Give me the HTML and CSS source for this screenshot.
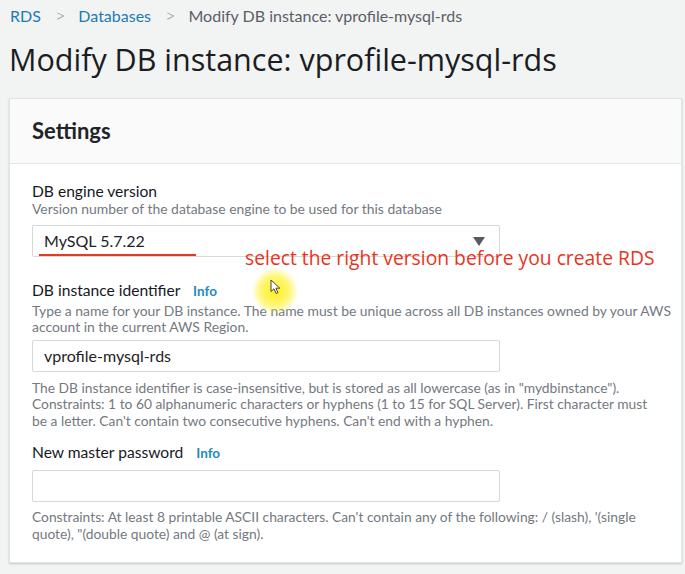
FILE: index.html
```html
<!DOCTYPE html>
<html lang="en">
<head>
<meta charset="utf-8">
<title>Modify DB instance</title>
<link rel="stylesheet" href="styles.css">
</head>
<body>
<nav class="crumbs">
  <a class="crumb-link">RDS</a>
  <span class="sep">&gt;</span>
  <a class="crumb-link">Databases</a>
  <span class="sep">&gt;</span>
  <span class="crumb-current">Modify DB instance: vprofile-mysql-rds</span>
</nav>
<h1 class="title">Modify DB instance: vprofile-mysql-rds</h1>
<section class="panel">
  <header class="panel-head"><h2>Settings</h2></header>
  <div class="panel-body">
    <div class="field">
      <div class="label">DB engine version</div>
      <div class="desc">Version number of the database engine to be used for this database</div>
      <div class="select-row">
        <div class="box select">
          <span class="value">MySQL 5.7.22</span>
          <span class="caret"></span>
          <span class="underline"></span>
        </div>
        <span class="note">select the right version before you create RDS</span>
      </div>
    </div>
    <div class="field f2">
      <div class="label">DB instance identifier <span class="info">Info</span><span class="spot"></span>
        <svg class="cursor" width="12" height="16" viewBox="0 0 12 16"><path d="M1 1 L1 12.5 L4 9.8 L6.2 14.5 L8 13.7 L5.9 9.2 L9.8 9.2 Z" fill="#fff" stroke="#444" stroke-width="1"/></svg>
      </div>
      <div class="desc d2">Type a name for your DB instance. The name must be unique across all DB instances owned by your AWS<br>account in the current AWS Region.</div>
      <div class="box input"><span class="value">vprofile-mysql-rds</span></div>
      <div class="help">The DB instance identifier is case-insensitive, but is stored as all lowercase (as in "mydbinstance").<br>Constraints: 1 to 60 alphanumeric characters or hyphens (1 to 15 for SQL Server). First character must<br>be a letter. Can't contain two consecutive hyphens. Can't end with a hyphen.</div>
    </div>
    <div class="field f3">
      <div class="label">New master password <span class="info">Info</span></div>
      <div class="box input pw"></div>
      <div class="help">Constraints: At least 8 printable ASCII characters. Can't contain any of the following: / (slash), '(single<br>quote), "(double quote) and @ (at sign).</div>
    </div>
  </div>
</section>
</body>
</html>
```
FILE: styles.css
```css
* { box-sizing: border-box; }
html, body { margin: 0; }
body {
  background: #f2f3f3;
  font-family: Lato, "Liberation Sans", sans-serif;
  color: #16191f;
  width: 685px;
  height: 574px;
  overflow: hidden;
  padding: 5px 0 0 9px;
}
.crumbs {
  display: flex;
  align-items: center;
  font-size: 16px;
  height: 20px;
  padding-left: 1px;
}
.crumb-link { color: #1d7ab8; }
.sep { color: #8d9399; margin: 0 13px 0 14px; font-size: 18px; font-weight: 300; }
.crumb-current { color: #5a6068; }
.title {
  font-family: "Open Sans", Lato, sans-serif;
  font-weight: 400;
  font-size: 30.5px;
  margin: 16px 0 0 0;
  line-height: 36px;
  color: #1a1d22;
}
.panel {
  margin-top: 21px;
  width: 673px;
  background: #fff;
  border: 1px solid #e2e4e4;
  box-shadow: 0 1px 2px rgba(0,0,0,0.18);
  height: 465px;
}
.panel-head {
  background: #fafafa;
  border-bottom: 1px solid #e6e8e8;
  height: 65px;
  padding: 18px 0 0 22px;
}
.panel-head h2 {
  margin: 0;
  font-size: 22px;
  font-weight: 700;
  color: #202428;
}
.panel-body { padding: 17px 0 0 22px; }
.label { font-size: 15.6px; line-height: 20px; position: relative; }
.info { color: #2489c3; font-weight: 700; font-size: 13.5px; margin-left: 9px; }
.desc, .help {
  font-size: 13.9px;
  line-height: 16.5px;
  color: #73797f;
  white-space: nowrap;
}
.d2 { margin-top: 2px; }
.help { font-size: 13.8px; }
.box {
  width: 468px;
  height: 32px;
  border: 1px solid #d5d9d9;
  border-radius: 2px;
  background: #fff;
  display: flex;
  align-items: center;
  padding-left: 11px;
  font-size: 16px;
  color: #1e2226;
  position: relative;
}
.select-row { display: flex; align-items: flex-end; margin-top: 7px; }
.select { flex: none; }
.caret {
  position: absolute;
  right: 14px;
  top: 11px;
  width: 0; height: 0;
  border-left: 6px solid transparent;
  border-right: 6px solid transparent;
  border-top: 9px solid #545b64;
}
.underline {
  position: absolute;
  left: 6px;
  top: 28px;
  width: 157px;
  height: 2px;
  background: #e23b25;
}
.note {
  font-family: "Open Sans", Lato, sans-serif;
  color: #e8341c;
  font-size: 19.3px;
  margin-left: -255px;
  margin-bottom: -14px;
  position: relative;
  white-space: nowrap;
}
.f2 { margin-top: 23px; }
.f2 .box { margin-top: 4px; }
.help { margin-top: 8px; }
.f3 { margin-top: 13px; }
.f3 .box { margin-top: 7px; }
.f3 .help { margin-top: 7px; }
.spot {
  position: absolute;
  left: 220px;
  top: -12px;
  width: 46px;
  height: 46px;
  border-radius: 50%;
  background: radial-gradient(circle, rgba(255,238,0,0.9) 0%, rgba(255,240,30,0.6) 45%, rgba(255,250,120,0) 72%);
}
.cursor { position: absolute; left: 238px; top: -1px; }
```
